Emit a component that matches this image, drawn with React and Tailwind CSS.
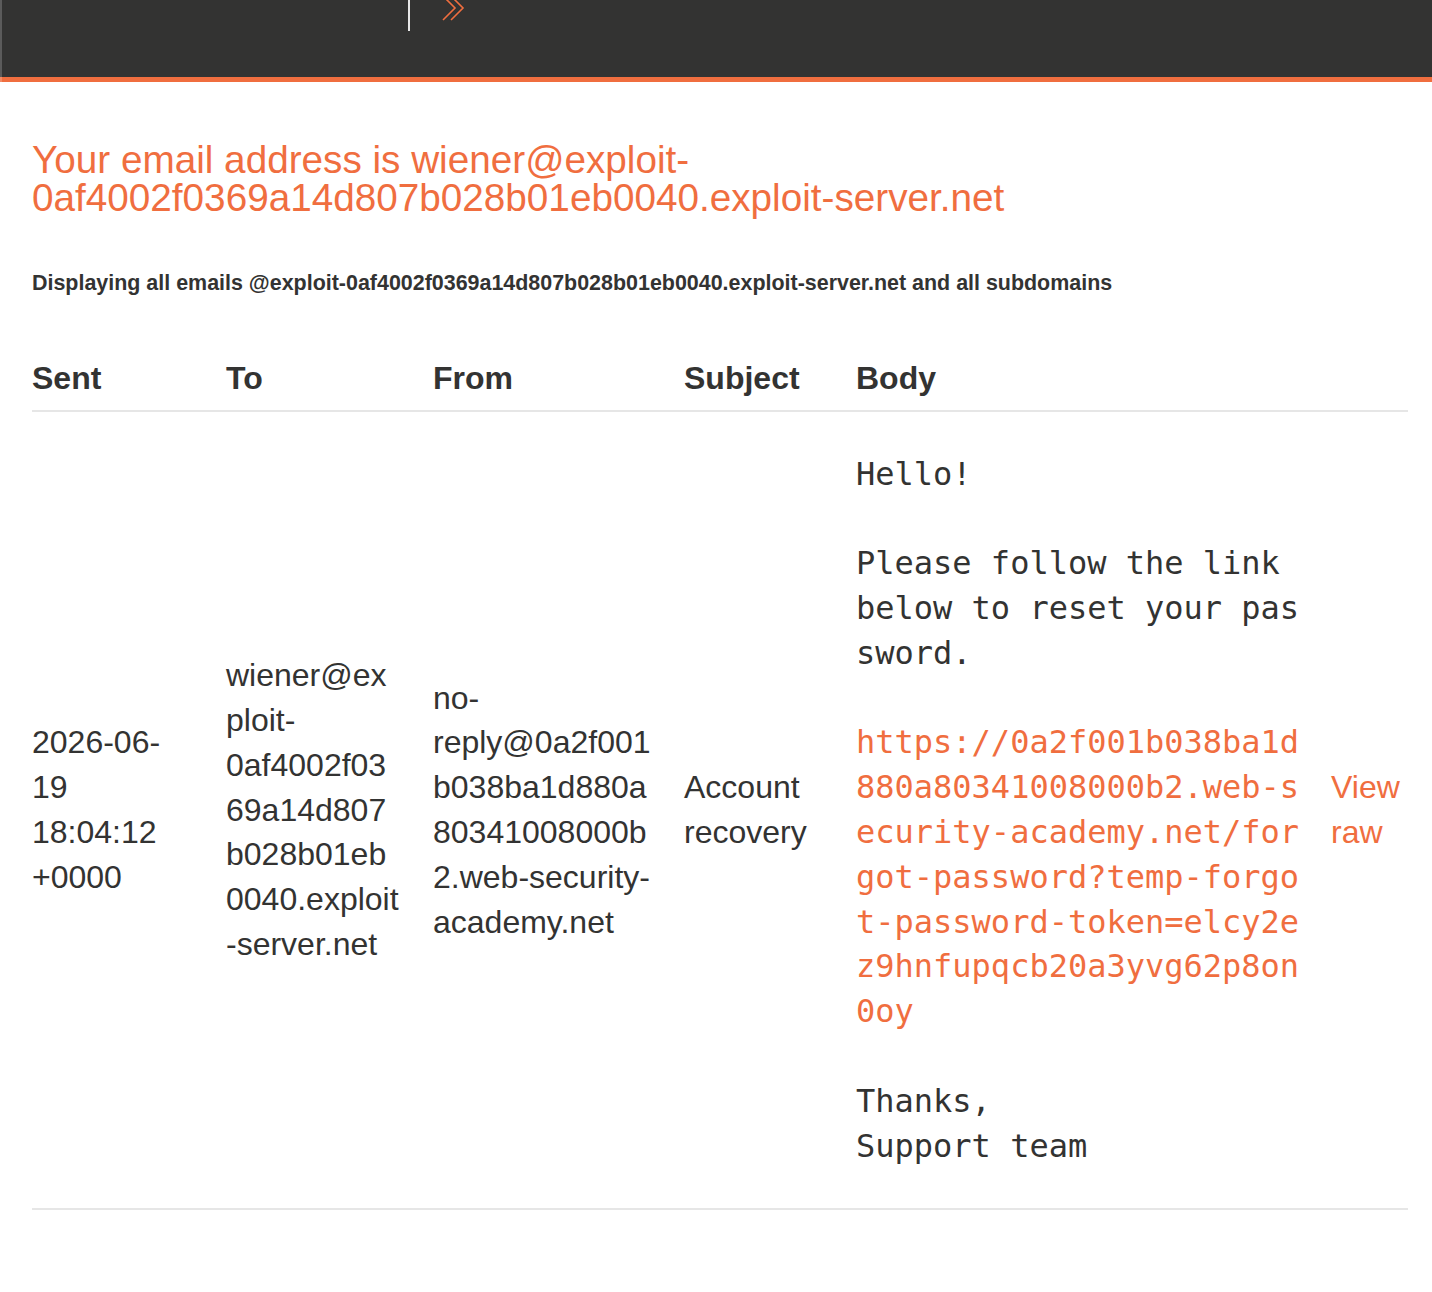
const ORANGE = 'text-[#f06e3f]'

const BODY_INTRO = 'Hello!\n\nPlease follow the link below to reset your password.\n\n'
const RESET_LINK =
  'https://0a2f001b038ba1d880a80341008000b2.web-security-academy.net/forgot-password?temp-forgot-password-token=elcy2ez9hnfupqcb20a3yvg62p8on0oy'
const BODY_OUTRO = '\n\nThanks,\nSupport team'

const emails = [
  {
    id: 1,
    sent: '2026-06-19 18:04:12 +0000',
    to: 'wiener@exploit-0af4002f0369a14d807b028b01eb0040.exploit-server.net',
    from: 'no-reply@0a2f001b038ba1d880a80341008000b2.web-security-academy.net',
    subject: 'Account recovery',
  },
]

function Header() {
  return (
    <header className="relative h-[82px] bg-[#333332] border-b-[5px] border-[#f06e3f]">
      <div className="flex items-start">
        <div className="ml-[408px] w-[2px] h-[31px] bg-[#e8e8e8]" />
        <svg
          className="ml-[31px] -mt-[6px]"
          width="28"
          height="30"
          viewBox="0 0 28 30"
          fill="none"
          stroke="#f06e3f"
          strokeWidth="1.6"
        >
          <polyline points="2,2 14,14 2,26" />
          <polyline points="10,2 22,14 10,26" />
        </svg>
      </div>
      {/* faint strip on the left edge */}
      <div className="absolute left-0 top-0 w-[2px] h-[82px] bg-white/20" />
    </header>
  )
}

export default function App() {
  return (
    <div className="min-h-[1292px] bg-white text-[#333332] font-['Liberation_Sans',Arial,sans-serif]">
      <Header />

      <main className="pl-[32px] pr-[24px]">
        <h1 className={`mt-[59px] text-[38.7px] leading-[38.4px] font-normal ${ORANGE}`}>
          Your email address is wiener@exploit-0af4002f0369a14d807b028b01eb0040.exploit-server.net
        </h1>

        <h4 className="mt-[50px] text-[21.45px] leading-[30px] font-bold">
          Displaying all emails @exploit-0af4002f0369a14d807b028b01eb0040.exploit-server.net and all
          subdomains
        </h4>

        <table className="mt-[58px] w-[1376px] table-fixed border-collapse text-[32px] leading-[44.8px]">
          <colgroup>
            <col className="w-[194px]" />
            <col className="w-[207px]" />
            <col className="w-[251px]" />
            <col className="w-[172px]" />
            <col className="w-[475px]" />
            <col />
          </colgroup>
          <thead>
            <tr className="border-b-2 border-[#e6e6e6]">
              <th className="pr-[32px] pb-[9px] text-left font-bold">Sent</th>
              <th className="pr-[32px] pb-[9px] text-left font-bold">To</th>
              <th className="pr-[32px] pb-[9px] text-left font-bold">From</th>
              <th className="pr-[32px] pb-[9px] text-left font-bold">Subject</th>
              <th className="pr-[32px] pb-[9px] text-left font-bold">Body</th>
              <th className="pb-[9px]" />
            </tr>
          </thead>
          <tbody>
            {emails.map((email) => (
              <tr key={email.id} className="border-b-2 border-[#e6e6e6]">
                <td className="pr-[32px] py-[40px] align-middle break-words">{email.sent}</td>
                <td className="pr-[32px] py-[40px] align-middle break-words">{email.to}</td>
                <td className="pr-[32px] py-[40px] align-middle break-words">{email.from}</td>
                <td className="pr-[32px] py-[40px] align-middle break-words">{email.subject}</td>
                <td className="pr-[32px] py-[40px] align-middle">
                  <pre className="w-[23.5ch] whitespace-pre-wrap break-all font-['DejaVu_Sans_Mono',Menlo,monospace] text-[32px] leading-[44.8px]">
                    {BODY_INTRO}
                    <a href="#" className={ORANGE}>
                      {RESET_LINK}
                    </a>
                    {BODY_OUTRO}
                  </pre>
                </td>
                <td className="py-[40px] align-middle">
                  <a href="#" className={ORANGE}>
                    View raw
                  </a>
                </td>
              </tr>
            ))}
          </tbody>
        </table>
      </main>
    </div>
  )
}
